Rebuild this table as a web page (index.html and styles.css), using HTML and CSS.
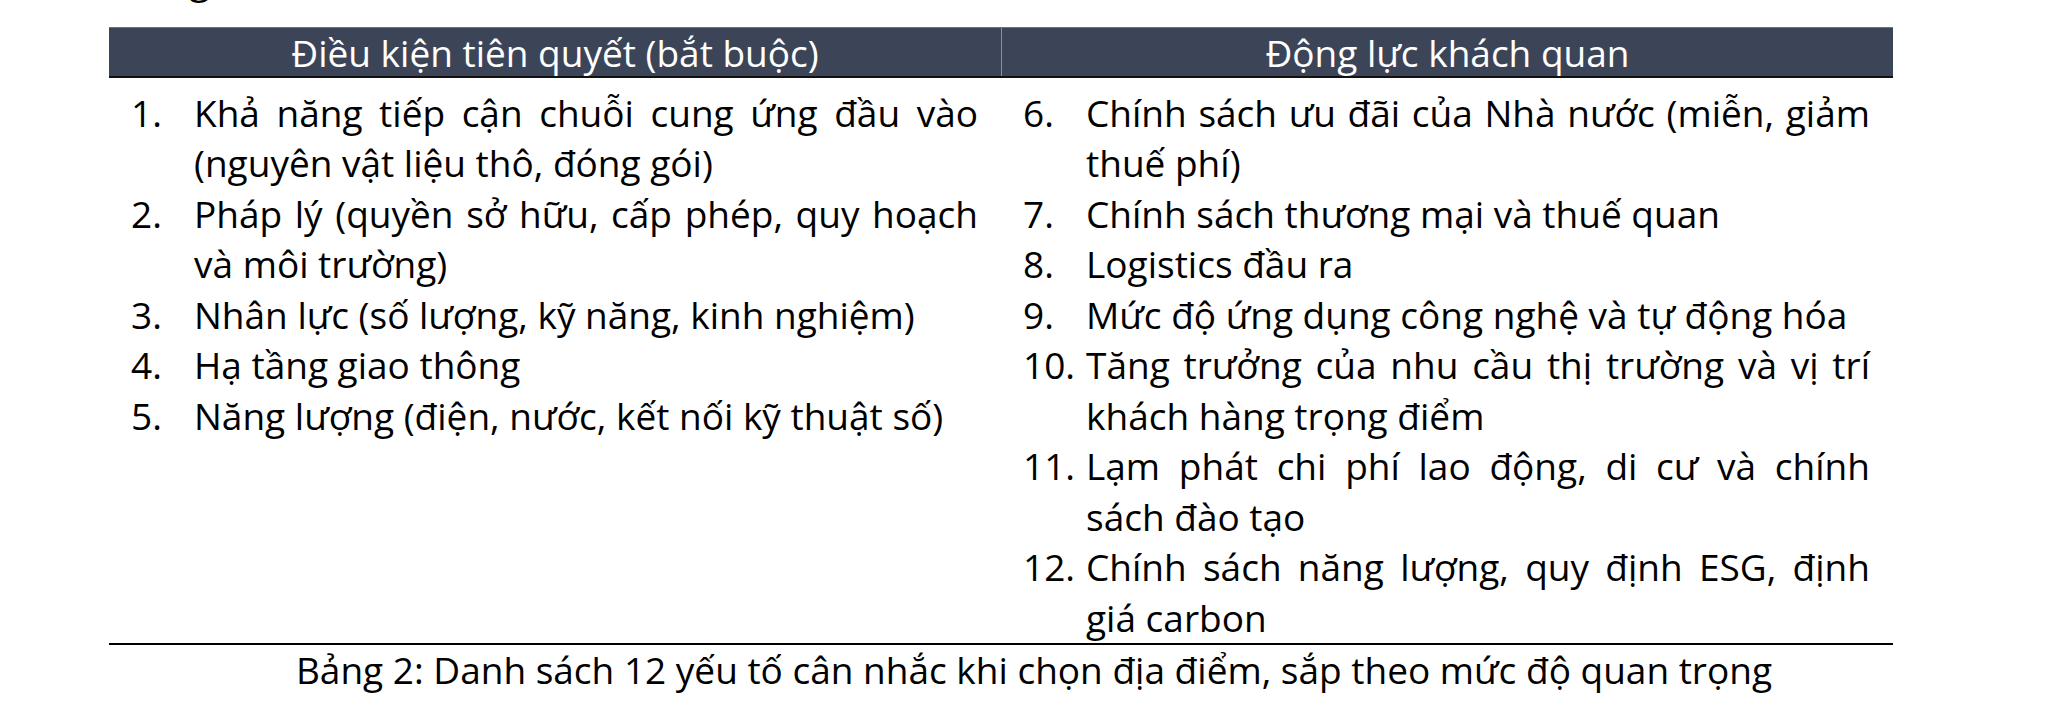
FILE: index.html
```html
<!DOCTYPE html>
<html lang="vi">
<head>
<meta charset="utf-8">
<link rel="stylesheet" href="styles.css">
</head>
<body>
<div class="page">
  <p class="prev">Trong số đó,</p>
  <div class="table">
    <div class="thead">
      <div class="th">Điều kiện tiên quyết (bắt buộc)</div>
      <div class="th th-right">Động lực khách quan</div>
    </div>
    <div class="tbody">
      <ul class="col">
        <li><span class="num">1.</span><span class="txt">Khả năng tiếp cận chuỗi cung ứng đầu vào (nguyên vật liệu thô, đóng gói)</span></li>
        <li><span class="num">2.</span><span class="txt">Pháp lý (quyền sở hữu, cấp phép, quy hoạch và môi trường)</span></li>
        <li><span class="num">3.</span><span class="txt">Nhân lực (số lượng, kỹ năng, kinh nghiệm)</span></li>
        <li><span class="num">4.</span><span class="txt">Hạ tầng giao thông</span></li>
        <li><span class="num">5.</span><span class="txt">Năng lượng (điện, nước, kết nối kỹ thuật số)</span></li>
      </ul>
      <ul class="col">
        <li><span class="num">6.</span><span class="txt">Chính sách ưu đãi của Nhà nước (miễn, giảm thuế phí)</span></li>
        <li><span class="num">7.</span><span class="txt">Chính sách thương mại và thuế quan</span></li>
        <li><span class="num">8.</span><span class="txt">Logistics đầu ra</span></li>
        <li><span class="num">9.</span><span class="txt">Mức độ ứng dụng công nghệ và tự động hóa</span></li>
        <li><span class="num">10.</span><span class="txt">Tăng trưởng của nhu cầu thị trường và vị trí khách hàng trọng điểm</span></li>
        <li><span class="num">11.</span><span class="txt">Lạm phát chi phí lao động, di cư và chính sách đào tạo</span></li>
        <li><span class="num">12.</span><span class="txt">Chính sách năng lượng, quy định ESG, định giá carbon</span></li>
      </ul>
    </div>
  </div>
  <p class="caption">Bảng 2: Danh sách 12 yếu tố cân nhắc khi chọn địa điểm, sắp theo mức độ quan trọng</p>
</div>
</body>
</html>
```

FILE: styles.css
```css
html, body {
  margin: 0;
  padding: 0;
  background: #ffffff;
  overflow: hidden;
}

body {
  font-family: "Open Sans", "Noto Sans", "Liberation Sans", sans-serif;
  font-size: 37px;
  line-height: 50.5px;
  color: #000000;
}

.page {
  width: 1784px;
  padding-left: 109px;
}

.prev {
  margin: -45px 0 0 0;
}

.table {
  margin-top: 21px;
}

.thead {
  display: grid;
  grid-template-columns: 1fr 1fr;
  background: #3c4557;
  border-top: 1px solid #6a7283;
  border-bottom: 2px solid #111111;
  color: #ffffff;
}

.th {
  height: 48px;
  line-height: 48px;
  text-align: center;
  padding-top: 1px;
  box-sizing: border-box;
}

.th-right {
  border-left: 1px solid #8a909c;
}

.tbody {
  display: grid;
  grid-template-columns: 1fr 1fr;
  padding-top: 10px;
  border-bottom: 2px solid #000000;
}

.col {
  list-style: none;
  margin: 0;
  padding: 0 23px 0 22px;
}

.col li {
  display: flex;
}

.num {
  flex: 0 0 63px;
}

.txt {
  flex: 1 1 auto;
  text-align: justify;
}

.caption {
  margin: 0;
  padding-left: 66px;
  text-align: center;
}
```
